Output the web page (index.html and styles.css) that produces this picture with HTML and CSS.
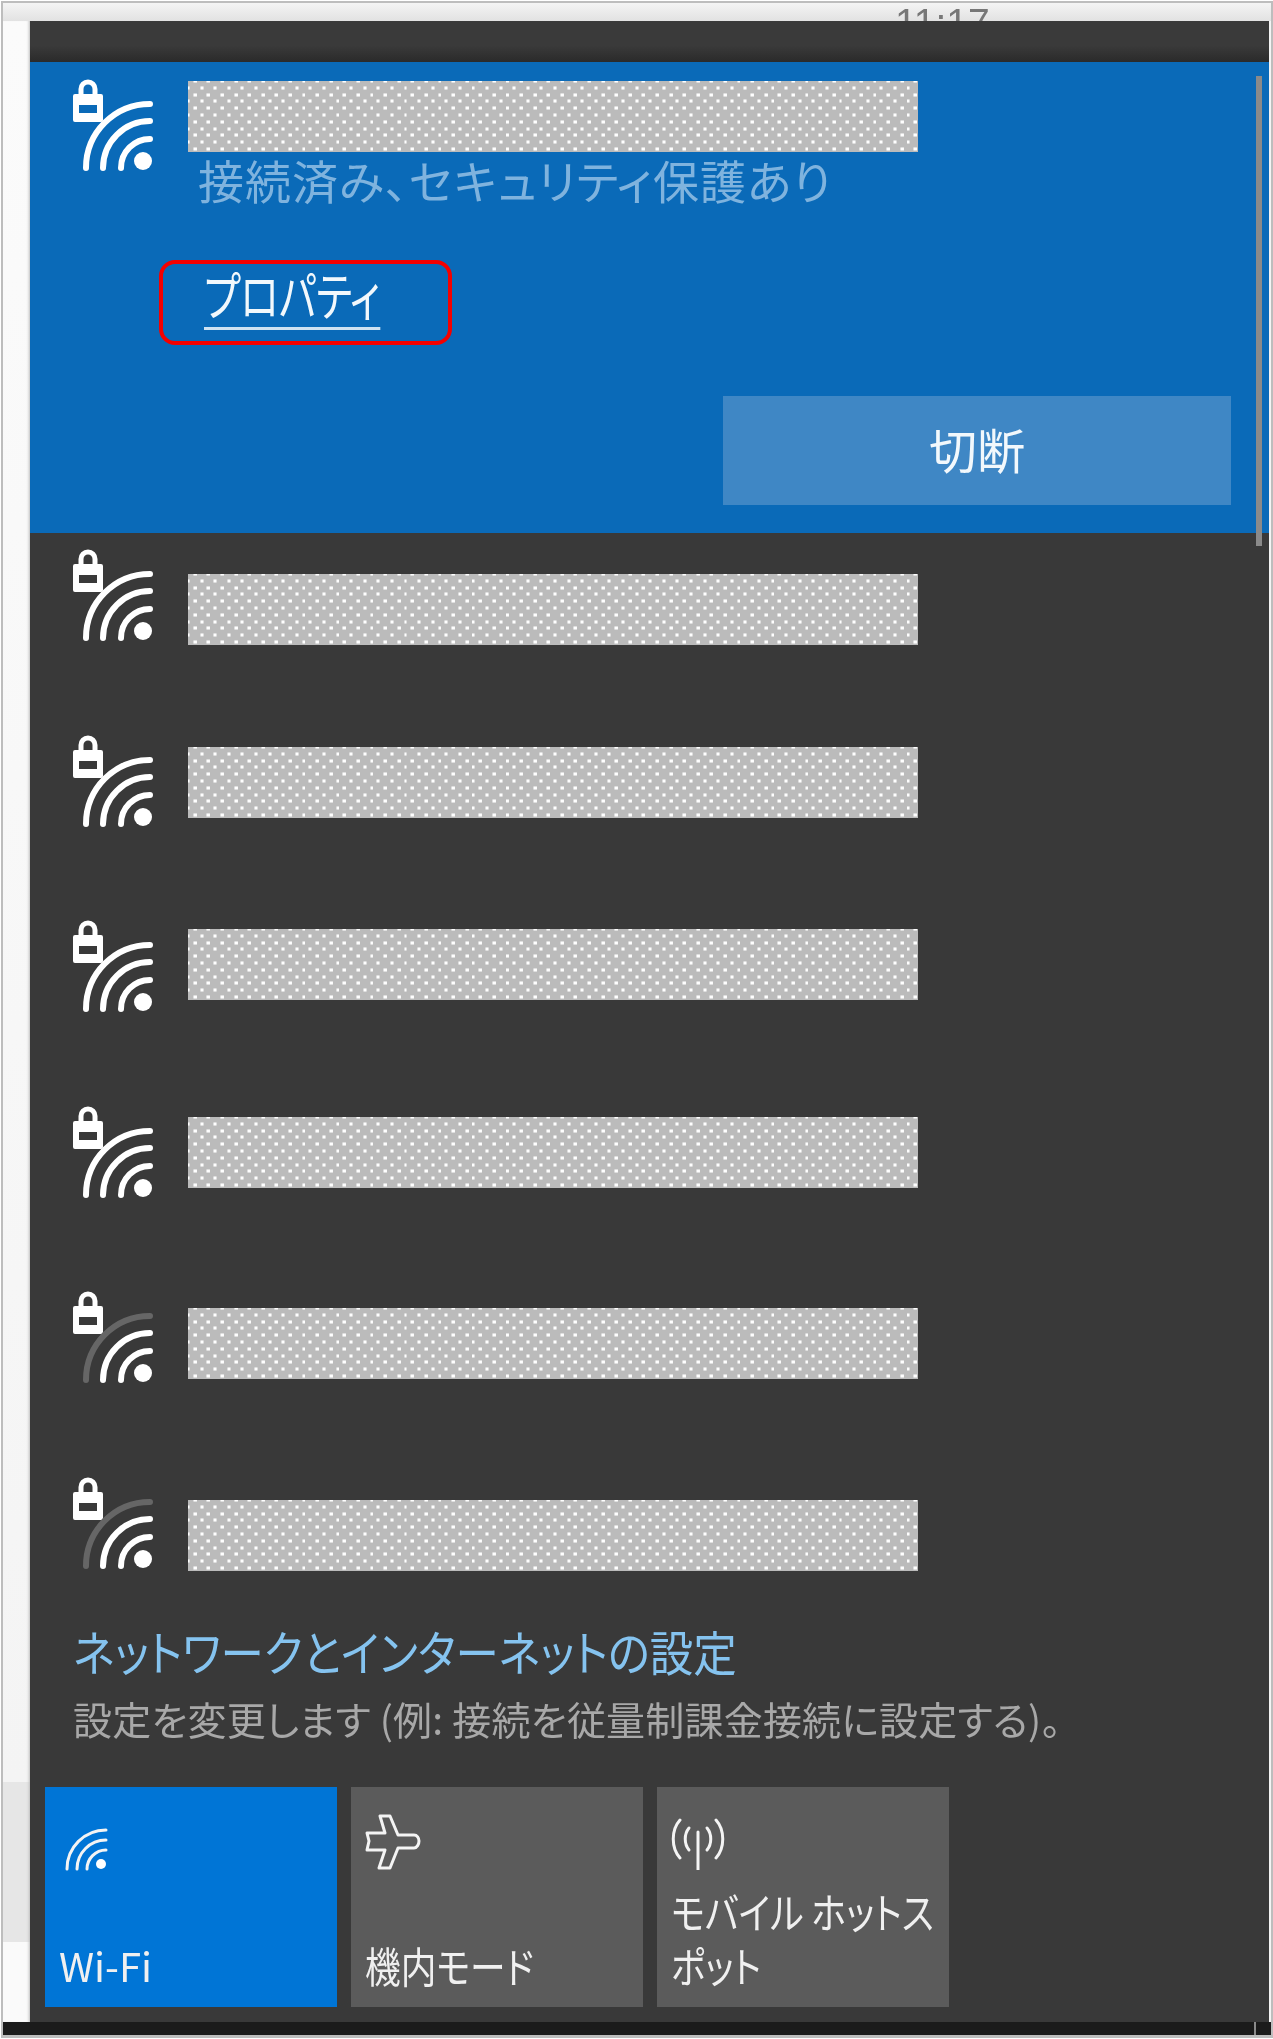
FILE: index.html
```html
<!DOCTYPE html>
<html lang="ja">
<head>
<meta charset="utf-8">
<title>ネットワーク</title>
<link rel="stylesheet" href="styles.css">
</head>
<body>
<svg class="defs" width="0" height="0" aria-hidden="true">
  <defs>
    <g id="lock">
      <path fill="currentColor" fill-rule="evenodd" d="M2 14H28a2 2 0 0 1 2 2V40a2 2 0 0 1-2 2H2a2 2 0 0 1-2-2V16a2 2 0 0 1 2-2ZM6 25V33H24V25Z"/>
      <path class="shackle" d="M8 15V9A7 7 0 0 1 22 9V15"/>
    </g>
  </defs>
</svg>
<div class="frame">
  <div class="titlebar"><span class="time">11:17</span></div>
  <div class="desktop">
    <div class="gutter"></div>
    <main class="panel">
      <div class="panel-top"></div>

      <section class="connected">
        <div class="head">
          <svg class="net-icon" viewBox="0 0 80 90"><use href="#lock"/><g class="arcs"><path d="M13 88A64 64 0 0 1 77 24"/><path d="M30 88A47 47 0 0 1 77 41"/><path d="M48 88A29 29 0 0 1 77 59"/></g><circle class="dot" cx="70" cy="81" r="9"/></svg>
          <div class="info">
            <div class="redacted"></div>
            <p class="status">接続済み、セキュリティ保護あり</p>
          </div>
        </div>
        <div class="highlight"><a class="prop-link" href="#">プロパティ</a></div>
        <button class="disconnect" type="button">切断</button>
      </section>

      <ul class="networks">
        <li class="net"><svg class="net-icon" viewBox="0 0 80 90"><use href="#lock"/><g class="arcs"><path d="M13 88A64 64 0 0 1 77 24"/><path d="M30 88A47 47 0 0 1 77 41"/><path d="M48 88A29 29 0 0 1 77 59"/></g><circle class="dot" cx="70" cy="81" r="9"/></svg><div class="redacted"></div></li>
        <li class="net"><svg class="net-icon" viewBox="0 0 80 90"><use href="#lock"/><g class="arcs"><path d="M13 88A64 64 0 0 1 77 24"/><path d="M30 88A47 47 0 0 1 77 41"/><path d="M48 88A29 29 0 0 1 77 59"/></g><circle class="dot" cx="70" cy="81" r="9"/></svg><div class="redacted"></div></li>
        <li class="net"><svg class="net-icon" viewBox="0 0 80 90"><use href="#lock"/><g class="arcs"><path d="M13 88A64 64 0 0 1 77 24"/><path d="M30 88A47 47 0 0 1 77 41"/><path d="M48 88A29 29 0 0 1 77 59"/></g><circle class="dot" cx="70" cy="81" r="9"/></svg><div class="redacted"></div></li>
        <li class="net"><svg class="net-icon" viewBox="0 0 80 90"><use href="#lock"/><g class="arcs"><path d="M13 88A64 64 0 0 1 77 24"/><path d="M30 88A47 47 0 0 1 77 41"/><path d="M48 88A29 29 0 0 1 77 59"/></g><circle class="dot" cx="70" cy="81" r="9"/></svg><div class="redacted"></div></li>
        <li class="net"><svg class="net-icon" viewBox="0 0 80 90"><use href="#lock"/><g class="arcs"><path class="weak" d="M13 88A64 64 0 0 1 77 24"/><path d="M30 88A47 47 0 0 1 77 41"/><path d="M48 88A29 29 0 0 1 77 59"/></g><circle class="dot" cx="70" cy="81" r="9"/></svg><div class="redacted"></div></li>
        <li class="net"><svg class="net-icon" viewBox="0 0 80 90"><use href="#lock"/><g class="arcs"><path class="weak" d="M13 88A64 64 0 0 1 77 24"/><path d="M30 88A47 47 0 0 1 77 41"/><path d="M48 88A29 29 0 0 1 77 59"/></g><circle class="dot" cx="70" cy="81" r="9"/></svg><div class="redacted"></div></li>
      </ul>

      <div class="settings">
        <a class="settings-link" href="#">ネットワークとインターネットの設定</a>
        <p class="settings-sub">設定を変更します (例: 接続を従量制課金接続に設定する)。</p>
      </div>

      <div class="tiles">
        <div class="tile tile-on">
          <div class="tile-icon">
            <svg class="ic-wifi" viewBox="0 0 43 42"><g class="thin"><path d="M2 41A39 39 0 0 1 41 2"/><path d="M12 41A29 29 0 0 1 41 12"/><path d="M22 41A19 19 0 0 1 41 22"/></g><circle class="dot" cx="36" cy="36" r="5"/></svg>
          </div>
          <span class="tile-label">Wi-Fi</span>
        </div>
        <div class="tile">
          <div class="tile-icon">
            <svg class="ic-plane" viewBox="0 0 56 56"><path class="thin" d="M15 2H25L33 21H49C52 21 54 24 54 27C54 30 52 34 49 34H33L25 54H14L20 36H8L2 36L4 27L2 19H8H20Z"/></svg>
          </div>
          <span class="tile-label tile-label-jp">機内モード</span>
        </div>
        <div class="tile">
          <div class="tile-icon">
            <svg class="ic-hot" viewBox="0 0 54 52"><g class="thin"><path d="M27 14V52"/><path d="M9 2C0 12 0 30 9 40"/><path d="M18 10C13 16 13 26 18 32"/><path d="M45 2C54 12 54 30 45 40"/><path d="M36 10C41 16 41 26 36 32"/></g></svg>
          </div>
          <span class="tile-label tile-label-jp">モバイル ホットス<br>ポット</span>
        </div>
      </div>
      <div class="scrollbar"></div>
    </main>
  </div>
  <div class="taskbar"><span class="tick"></span></div>
</div>
</body>
</html>
```

FILE: styles.css
```css
* { box-sizing: border-box; }
html, body { margin: 0; padding: 0; }
body {
  background: #fff;
  font-family: "Noto Sans CJK JP", "Noto Sans", sans-serif;
  font-feature-settings: "palt";
}
.defs { position: absolute; }

.frame {
  width: 1272px;
  height: 2037px;
  margin: 1px 0 0 1px;
  border: 2px solid #bdbdbd;
  border-bottom-width: 3px;
  background: #f4f4f4;
  display: flex;
  flex-direction: column;
}
.titlebar {
  height: 18px;
  flex: none;
  overflow: hidden;
  padding-left: 892px;
  background: linear-gradient(#f4f4f4, #e2e2e2);
}
.time {
  display: block;
  font-family: "Liberation Sans", sans-serif;
  font-size: 39px;
  line-height: 40px;
  color: #777;
  filter: blur(.7px);
}
.desktop { flex: 1; display: flex; min-height: 0; }
.gutter {
  width: 27px;
  flex: none;
  background: linear-gradient(#fbfbfb, #f4f4f4 88%, #e6e6e6 88%, #e6e6e6 96%, #fafafa 96%);
  box-shadow: inset -3px 0 3px -2px #bbb;
}
.panel {
  position: relative;
  width: 1239px;
  flex: none;
  background: #393939;
  color: #fff;
  display: flex;
  flex-direction: column;
}
.panel-top {
  height: 41px;
  flex: none;
  background: linear-gradient(#3a3a3a 60%, #2a2a2a);
}

/* connected network */
.connected {
  height: 471px;
  flex: none;
  padding-top: 18px;
  background: #0a6ab8;
}
.head { display: flex; align-items: flex-start; gap: 36px; padding-left: 43px; height: 126px; }
.net-icon { width: 80px; height: 90px; flex: none; color: #fff; overflow: visible; filter: blur(.5px); }
.shackle { fill: none; stroke: currentColor; stroke-width: 5; }
.arcs path { fill: none; stroke: #fff; stroke-width: 6; stroke-linecap: round; }
.arcs path.weak { stroke: #666; }
.dot { fill: #fff; }

.redacted {
  width: 730px;
  height: 71px;
  flex: none;
  background-color: #bbb;
  background-image: url("data:image/svg+xml,%3Csvg xmlns='http://www.w3.org/2000/svg' width='13.6' height='13.6'%3E%3Cg fill='%23fff'%3E%3Crect x='5.3' y='-1.5' width='3.4' height='3'/%3E%3Crect x='5.3' y='12.1' width='3.4' height='3'/%3E%3Crect x='-1.5' y='5.3' width='3' height='3'/%3E%3Crect x='12.1' y='5.3' width='3' height='3'/%3E%3C/g%3E%3C/svg%3E");
  background-size: 13.6px 13.6px;
}
.info { padding-top: 1px; margin-left: -1px; }
.status {
  margin: 0;
  padding-left: 10px;
  font-size: 46px;
  letter-spacing: 1px;
  line-height: 54px;
  color: #7fb3de;
  white-space: nowrap;
  filter: blur(.5px);
}
.highlight {
  width: 293px;
  height: 85px;
  margin: 54px 0 0 129px;
  border: 4px solid #f40000;
  border-radius: 16px;
  padding-left: 41px;
}
.prop-link {
  display: inline-block;
  font-size: 52px;
  line-height: 60px;
  height: 66px;
  color: #f2f8fc;
  text-decoration: none;
  border-bottom: 3px solid #cfe2f2;
  transform: scaleX(.76);
  transform-origin: left center;
  filter: blur(.4px);
}
.disconnect {
  display: block;
  width: 508px;
  height: 109px;
  margin: 51px 0 0 693px;
  padding: 0 0 6px;
  border: 0;
  background: #3f87c5;
  color: #f2f8fc;
  font: inherit;
  font-size: 48px;
  line-height: 1;
  filter: blur(.3px);
}

/* list */
.networks { list-style: none; margin: 0; padding: 0; flex: none; }
.net {
  height: 185.5px;
  padding: 17px 0 0 43px;
  display: flex;
  align-items: flex-start;
  gap: 35px;
}
.net:nth-child(1) .redacted { margin-top: 24px; }
.net:nth-child(2) .redacted { margin-top: 11px; }
.net:nth-child(3) .redacted { margin-top: 8px; }
.net:nth-child(4) .redacted { margin-top: 10px; }
.net:nth-child(5) .redacted { margin-top: 16px; }
.net:nth-child(6) .redacted { margin-top: 22px; }
.net:last-child { height: 139.5px; }

/* settings */
.settings { margin-top: 20px; padding-left: 43px; flex: none; }
.settings-link {
  display: block;
  width: max-content;
  font-size: 48px;
  line-height: 60px;
  color: #85c3ef;
  text-decoration: none;
  white-space: nowrap;
  transform: scaleX(.905);
  transform-origin: left center;
  filter: blur(.5px);
}
.settings-sub {
  margin: 14px 0 0;
  font-size: 39px;
  letter-spacing: .2px;
  line-height: 48px;
  color: #a8a8a8;
  white-space: nowrap;
  filter: blur(.5px);
}

/* quick actions */
.tiles { display: flex; gap: 14px; margin: 45px 0 0 15px; flex: none; }
.tile {
  width: 292px;
  height: 220px;
  padding: 28px 14px 15px;
  background: #5b5b5b;
  display: flex;
  flex-direction: column;
  justify-content: space-between;
}
.tile-on { background: #0075d6; }
.tile-icon { height: 55px; display: flex; align-items: flex-end; }
.ic-wifi { width: 43px; height: 42px; margin-left: 6px; overflow: visible; }
.ic-plane { width: 56px; height: 56px; }
.ic-hot { width: 54px; height: 52px; }
.thin { fill: none; stroke: #f4f4f4; stroke-width: 3; stroke-linejoin: round; stroke-linecap: round; }
.tile-label {
  display: block;
  width: max-content;
  font-size: 40px;
  line-height: 54px;
  color: #f0f0f0;
  white-space: nowrap;
  filter: blur(.4px);
}
.tile-label-jp {
  font-size: 42px;
  transform: scaleX(.85);
  transform-origin: left center;
}

.scrollbar {
  position: absolute;
  left: 1226px;
  top: 55px;
  width: 6px;
  height: 470px;
  background: #8a8a8a;
}

.taskbar {
  height: 13px;
  flex: none;
  padding-left: 1251px;
  background: #1b1b1b;
}
.tick { display: block; width: 2px; height: 13px; background: #8a8a8a; }
```
